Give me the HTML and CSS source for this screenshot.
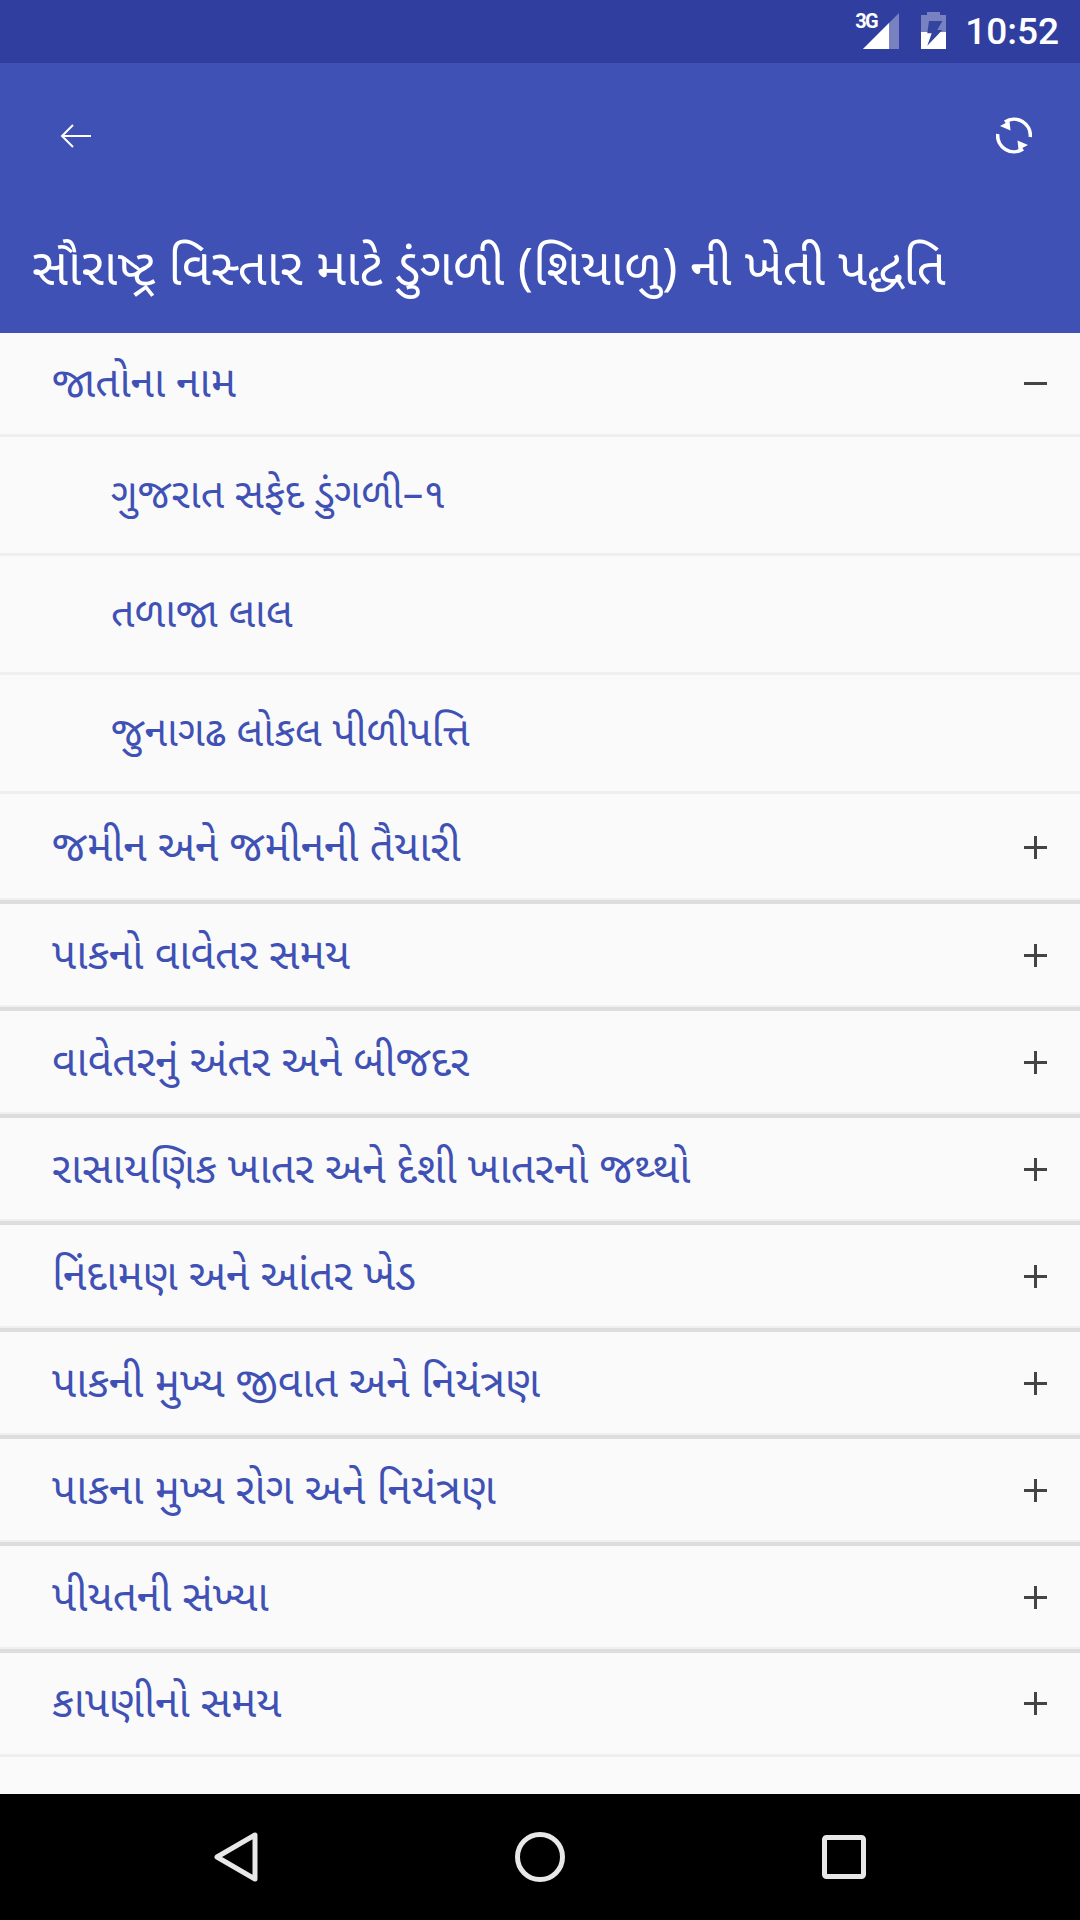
FILE: index.html
```html
<!DOCTYPE html>
<html lang="gu">
<head>
<meta charset="utf-8">
<title>ડુંગળી</title>
<link rel="stylesheet" href="styles.css">
</head>
<body>
<div class="screen">
  <div class="statusbar">
    <div class="signal">
      <span class="net">3G</span>
      <svg class="signal-icon" viewBox="0 0 36 36"><path d="M36 0V36H0Z" fill="#fff" fill-opacity=".35"/><path d="M26 10V36H0Z" fill="#fff"/></svg>
    </div>
    <svg class="battery" viewBox="0 0 25 37"><path d="M6 0H19V3H25V37H0V3H6Z" fill="#fff" fill-opacity=".35"/><path d="M0 20H25V37H0Z" fill="#fff"/><path d="M8 9H21.300L16.300 18H21.300L6.300 33.700L10.700 21.300H6.300Z" fill="#35449f"/></svg>
    <span class="clock">10:52</span>
  </div>
  <header class="appbar">
    <div class="toolbar">
      <svg class="back" viewBox="0 0 32 24"><path d="M31 12H2M13 1L2 12L13 23" fill="none" stroke="#fff" stroke-width="2"/></svg>
      <svg class="sync" viewBox="0 0 36 37"><g fill="none" stroke="#fff" stroke-width="3.600"><path d="M9 5A16.300 16.300 0 0 1 34.300 20"/><path d="M27 32A16.300 16.300 0 0 1 1.700 17"/></g><path d="M4 9L13.500 4L14.500 13.500ZM32 28L22.500 33L21.500 23.500Z" fill="#fff"/></svg>
    </div>
    <h1 class="title">સૌરાષ્ટ્ર વિસ્તાર માટે ડુંગળી (શિયાળુ) ની ખેતી પદ્ધતિ</h1>
  </header>
  <main class="list">
    <div class="row open"><span class="label">જાતોના નામ</span><span class="minus"></span></div>
    <div class="child">ગુજરાત સફેદ ડુંગળી–૧</div>
    <div class="child">તળાજા લાલ</div>
    <div class="child">જુનાગઢ લોકલ પીળીપત્તિ</div>
    <div class="row first"><span class="label">જમીન અને જમીનની તૈયારી</span><span class="plus"></span></div>
    <div class="row"><span class="label">પાકનો વાવેતર સમય</span><span class="plus"></span></div>
    <div class="row"><span class="label">વાવેતરનું અંતર અને બીજદર</span><span class="plus"></span></div>
    <div class="row"><span class="label">રાસાયણિક ખાતર અને દેશી ખાતરનો જથ્થો</span><span class="plus"></span></div>
    <div class="row"><span class="label">નિંદામણ અને આંતર ખેડ</span><span class="plus"></span></div>
    <div class="row"><span class="label">પાકની મુખ્ય જીવાત અને નિયંત્રણ</span><span class="plus"></span></div>
    <div class="row"><span class="label">પાકના મુખ્ય રોગ અને નિયંત્રણ</span><span class="plus"></span></div>
    <div class="row"><span class="label">પીયતની સંખ્યા</span><span class="plus"></span></div>
    <div class="row last"><span class="label">કાપણીનો સમય</span><span class="plus"></span></div>
  </main>
  <nav class="navbar">
    <svg class="nav-back" viewBox="0 0 44 50"><path d="M41 3V47L3 25Z" fill="none" stroke="#e8e8e8" stroke-width="5" stroke-linejoin="round"/></svg>
    <svg class="nav-home" viewBox="0 0 50 50"><circle cx="25" cy="25" r="22.500" fill="none" stroke="#e8e8e8" stroke-width="5"/></svg>
    <svg class="nav-recent" viewBox="0 0 44 44"><rect x="2.500" y="2.500" width="39" height="39" rx="2" fill="none" stroke="#e8e8e8" stroke-width="5"/></svg>
  </nav>
</div>
</body>
</html>
```
FILE: styles.css
```css
* { box-sizing: border-box; }
html, body { margin: 0; padding: 0; }
body { font-family: "Noto Sans Gujarati", Roboto, "Noto Sans", sans-serif; background: #fafafa; }
.screen { width: 1080px; height: 1920px; display: flex; flex-direction: column; overflow: hidden; }
.statusbar { height: 63px; flex: none; background: #303f9f; display: flex; align-items: flex-start; justify-content: flex-end; padding: 12px 21px 0 0; }
.signal { position: relative; width: 36px; height: 37px; margin-right: 22px; }
.signal-icon { position: absolute; left: 0; top: 1px; width: 36px; height: 36px; }
.net { position: absolute; left: -8px; top: -1px; font-family: Roboto, sans-serif; font-size: 20px; line-height: 20px; font-weight: 700; color: #fff; letter-spacing: -1.500px; }
.battery { width: 25px; height: 37px; margin-right: 19px; }
.clock { font-family: Roboto, sans-serif; font-size: 37px; line-height: 42px; font-weight: 500; color: #fff; margin-top: -1px; }
.appbar { height: 270px; flex: none; background: #3f51b5; color: #fff; display: flex; flex-direction: column; }
.toolbar { height: 144px; flex: none; display: flex; align-items: center; justify-content: space-between; padding: 1px 48px 0 60px; }
.back { width: 32px; height: 24px; }
.sync { width: 36px; height: 37px; }
.title { margin: 0; padding: 38px 32px 0; font-size: 50.700px; line-height: 56px; font-weight: 400; white-space: nowrap; }
.list { flex: 1; display: flex; flex-direction: column; color: #3f51b5; font-size: 42.500px; font-weight: 400; }
.label { padding-top: 6px; }
.row { height: 107px; flex: none; display: flex; align-items: center; justify-content: space-between; padding: 0 33px 0 52px; border-bottom: 4px solid #ddd; box-shadow: inset 0 -2px 0 #f0f0f0; }
.row.first { height: 110px; }
.row.open, .row.last { height: 104px; border-bottom: 3px solid #efefef; box-shadow: none; }
.child { height: 119px; flex: none; display: flex; align-items: center; font-size: 41px; padding: 5px 0 0 111px; border-bottom: 3px solid #efefef; }
.plus, .minus { position: relative; width: 23px; height: 23px; flex: none; }
.plus::before, .minus::before { content: ""; position: absolute; left: 0; right: 0; top: 10px; height: 3px; background: #444; }
.plus::after { content: ""; position: absolute; top: 0; bottom: 0; left: 10px; width: 3px; background: #444; }
.navbar { height: 126px; flex: none; background: #000; position: relative; display: flex; align-items: center; padding: 0 214px 0 214px; justify-content: space-between; }
.nav-back { width: 44px; height: 50px; }
.nav-home { width: 50px; height: 50px; }
.nav-recent { width: 44px; height: 44px; }
```
